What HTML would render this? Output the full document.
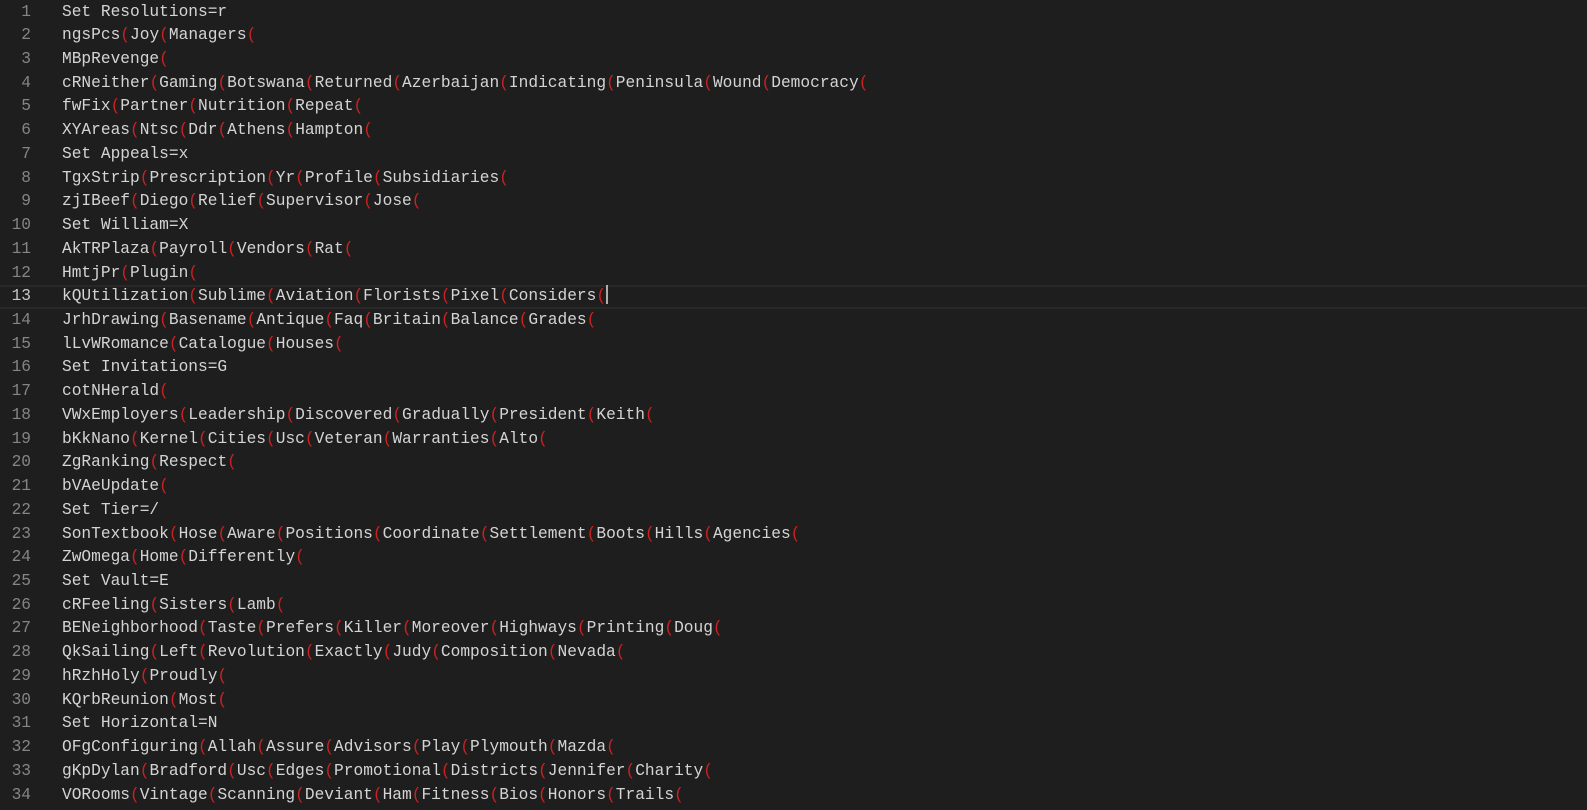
<!DOCTYPE html>
<html><head><meta charset="utf-8"><style>
html,body{margin:0;padding:0;background:#1e1e1e;width:1587px;height:810px;overflow:hidden}
.ed{position:relative;top:2px;font-family:"Liberation Mono",monospace;font-size:16.2px;color:#d4d4d4}
.l{position:absolute;left:0;width:1587px;height:23.73px;line-height:23.73px;white-space:pre}
.n{position:absolute;left:0;width:31px;text-align:right;color:#858585}
.t{position:absolute;left:62px}
.p{color:#cd2020}
.cur{border-top:2px solid #282828;border-bottom:2px solid #282828;box-sizing:border-box;line-height:19.73px}
.cur .n{color:#c6c6c6}
.caret{display:inline-block;width:2px;height:19px;background:#aeafad;vertical-align:middle;margin-top:-3px}
</style></head><body><div class="ed">
<div class="l" style="top:-1.5px"><span class="n">1</span><span class="t">Set Resolutions=r</span></div>
<div class="l" style="top:22.23px"><span class="n">2</span><span class="t">ngsPcs<span class="p">(</span>Joy<span class="p">(</span>Managers<span class="p">(</span></span></div>
<div class="l" style="top:45.96px"><span class="n">3</span><span class="t">MBpRevenge<span class="p">(</span></span></div>
<div class="l" style="top:69.69px"><span class="n">4</span><span class="t">cRNeither<span class="p">(</span>Gaming<span class="p">(</span>Botswana<span class="p">(</span>Returned<span class="p">(</span>Azerbaijan<span class="p">(</span>Indicating<span class="p">(</span>Peninsula<span class="p">(</span>Wound<span class="p">(</span>Democracy<span class="p">(</span></span></div>
<div class="l" style="top:93.42px"><span class="n">5</span><span class="t">fwFix<span class="p">(</span>Partner<span class="p">(</span>Nutrition<span class="p">(</span>Repeat<span class="p">(</span></span></div>
<div class="l" style="top:117.15px"><span class="n">6</span><span class="t">XYAreas<span class="p">(</span>Ntsc<span class="p">(</span>Ddr<span class="p">(</span>Athens<span class="p">(</span>Hampton<span class="p">(</span></span></div>
<div class="l" style="top:140.88px"><span class="n">7</span><span class="t">Set Appeals=x</span></div>
<div class="l" style="top:164.61px"><span class="n">8</span><span class="t">TgxStrip<span class="p">(</span>Prescription<span class="p">(</span>Yr<span class="p">(</span>Profile<span class="p">(</span>Subsidiaries<span class="p">(</span></span></div>
<div class="l" style="top:188.34px"><span class="n">9</span><span class="t">zjIBeef<span class="p">(</span>Diego<span class="p">(</span>Relief<span class="p">(</span>Supervisor<span class="p">(</span>Jose<span class="p">(</span></span></div>
<div class="l" style="top:212.07px"><span class="n">10</span><span class="t">Set William=X</span></div>
<div class="l" style="top:235.8px"><span class="n">11</span><span class="t">AkTRPlaza<span class="p">(</span>Payroll<span class="p">(</span>Vendors<span class="p">(</span>Rat<span class="p">(</span></span></div>
<div class="l" style="top:259.53px"><span class="n">12</span><span class="t">HmtjPr<span class="p">(</span>Plugin<span class="p">(</span></span></div>
<div class="l cur" style="top:283.26px"><span class="n">13</span><span class="t">kQUtilization<span class="p">(</span>Sublime<span class="p">(</span>Aviation<span class="p">(</span>Florists<span class="p">(</span>Pixel<span class="p">(</span>Considers<span class="p">(</span><span class="caret"></span></span></div>
<div class="l" style="top:306.99px"><span class="n">14</span><span class="t">JrhDrawing<span class="p">(</span>Basename<span class="p">(</span>Antique<span class="p">(</span>Faq<span class="p">(</span>Britain<span class="p">(</span>Balance<span class="p">(</span>Grades<span class="p">(</span></span></div>
<div class="l" style="top:330.72px"><span class="n">15</span><span class="t">lLvWRomance<span class="p">(</span>Catalogue<span class="p">(</span>Houses<span class="p">(</span></span></div>
<div class="l" style="top:354.45px"><span class="n">16</span><span class="t">Set Invitations=G</span></div>
<div class="l" style="top:378.18px"><span class="n">17</span><span class="t">cotNHerald<span class="p">(</span></span></div>
<div class="l" style="top:401.91px"><span class="n">18</span><span class="t">VWxEmployers<span class="p">(</span>Leadership<span class="p">(</span>Discovered<span class="p">(</span>Gradually<span class="p">(</span>President<span class="p">(</span>Keith<span class="p">(</span></span></div>
<div class="l" style="top:425.64px"><span class="n">19</span><span class="t">bKkNano<span class="p">(</span>Kernel<span class="p">(</span>Cities<span class="p">(</span>Usc<span class="p">(</span>Veteran<span class="p">(</span>Warranties<span class="p">(</span>Alto<span class="p">(</span></span></div>
<div class="l" style="top:449.37px"><span class="n">20</span><span class="t">ZgRanking<span class="p">(</span>Respect<span class="p">(</span></span></div>
<div class="l" style="top:473.1px"><span class="n">21</span><span class="t">bVAeUpdate<span class="p">(</span></span></div>
<div class="l" style="top:496.83px"><span class="n">22</span><span class="t">Set Tier=/</span></div>
<div class="l" style="top:520.56px"><span class="n">23</span><span class="t">SonTextbook<span class="p">(</span>Hose<span class="p">(</span>Aware<span class="p">(</span>Positions<span class="p">(</span>Coordinate<span class="p">(</span>Settlement<span class="p">(</span>Boots<span class="p">(</span>Hills<span class="p">(</span>Agencies<span class="p">(</span></span></div>
<div class="l" style="top:544.29px"><span class="n">24</span><span class="t">ZwOmega<span class="p">(</span>Home<span class="p">(</span>Differently<span class="p">(</span></span></div>
<div class="l" style="top:568.02px"><span class="n">25</span><span class="t">Set Vault=E</span></div>
<div class="l" style="top:591.75px"><span class="n">26</span><span class="t">cRFeeling<span class="p">(</span>Sisters<span class="p">(</span>Lamb<span class="p">(</span></span></div>
<div class="l" style="top:615.48px"><span class="n">27</span><span class="t">BENeighborhood<span class="p">(</span>Taste<span class="p">(</span>Prefers<span class="p">(</span>Killer<span class="p">(</span>Moreover<span class="p">(</span>Highways<span class="p">(</span>Printing<span class="p">(</span>Doug<span class="p">(</span></span></div>
<div class="l" style="top:639.21px"><span class="n">28</span><span class="t">QkSailing<span class="p">(</span>Left<span class="p">(</span>Revolution<span class="p">(</span>Exactly<span class="p">(</span>Judy<span class="p">(</span>Composition<span class="p">(</span>Nevada<span class="p">(</span></span></div>
<div class="l" style="top:662.94px"><span class="n">29</span><span class="t">hRzhHoly<span class="p">(</span>Proudly<span class="p">(</span></span></div>
<div class="l" style="top:686.67px"><span class="n">30</span><span class="t">KQrbReunion<span class="p">(</span>Most<span class="p">(</span></span></div>
<div class="l" style="top:710.4px"><span class="n">31</span><span class="t">Set Horizontal=N</span></div>
<div class="l" style="top:734.13px"><span class="n">32</span><span class="t">OFgConfiguring<span class="p">(</span>Allah<span class="p">(</span>Assure<span class="p">(</span>Advisors<span class="p">(</span>Play<span class="p">(</span>Plymouth<span class="p">(</span>Mazda<span class="p">(</span></span></div>
<div class="l" style="top:757.86px"><span class="n">33</span><span class="t">gKpDylan<span class="p">(</span>Bradford<span class="p">(</span>Usc<span class="p">(</span>Edges<span class="p">(</span>Promotional<span class="p">(</span>Districts<span class="p">(</span>Jennifer<span class="p">(</span>Charity<span class="p">(</span></span></div>
<div class="l" style="top:781.59px"><span class="n">34</span><span class="t">VORooms<span class="p">(</span>Vintage<span class="p">(</span>Scanning<span class="p">(</span>Deviant<span class="p">(</span>Ham<span class="p">(</span>Fitness<span class="p">(</span>Bios<span class="p">(</span>Honors<span class="p">(</span>Trails<span class="p">(</span></span></div>
</div></body></html>
